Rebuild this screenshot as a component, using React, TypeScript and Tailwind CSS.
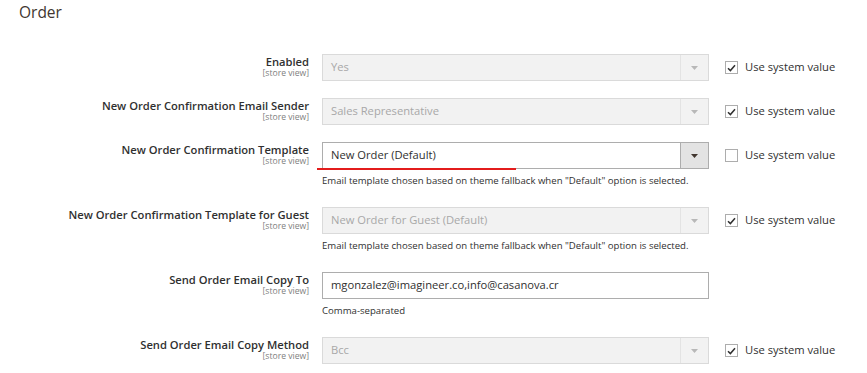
import type { ReactNode } from "react";

type RowProps = {
  label: string;
  children: ReactNode;
  note?: string;
  useSystem?: boolean | null;
};

function Arrow({ active }: { active?: boolean }) {
  return (
    <svg width="7" height="4" viewBox="0 0 7 4" className="block">
      <path d="M0 0h7L3.5 4z" fill={active ? "#41362f" : "#b8b8b8"} />
    </svg>
  );
}

function Select({ value, disabled, underline }: { value: string; disabled?: boolean; underline?: boolean }) {
  return (
    <div
      className={
        disabled
          ? "relative flex h-[27px] w-full items-center border border-[#dadada] bg-[#f2f2f2]"
          : "relative flex h-[27px] w-full items-center border border-[#adadad] bg-white"
      }
    >
      <span
        className={
          disabled
            ? "flex-1 truncate pl-[8px] text-[11.2px] text-[#a8a8a8]"
            : "flex-1 truncate pl-[8px] text-[11.2px] text-[#303030]"
        }
      >
        {value}
      </span>
      <span
        className={
          disabled
            ? "flex h-full w-[28px] items-center justify-center border-l border-[#e3e3e3]"
            : "flex h-full w-[28px] items-center justify-center border-l border-[#adadad] bg-[#e3e3e3]"
        }
      >
        <Arrow active={!disabled} />
      </span>
      {underline ? <span className="absolute bottom-[-2px] left-[-6px] h-[2px] w-[199px] bg-[#e31c1c]" /> : null}
    </div>
  );
}

function Checkbox({ checked }: { checked: boolean }) {
  return (
    <span className="flex h-[13px] w-[13px] items-center justify-center border border-[#adadad] bg-white">
      {checked ? (
        <svg width="9" height="8" viewBox="0 0 9 8">
          <path d="M1 4.2l2.4 2.4L8 1.2" fill="none" stroke="#303030" strokeWidth="1.5" />
        </svg>
      ) : null}
    </span>
  );
}

function Row({ label, children, note, useSystem }: RowProps) {
  return (
    <div className={note ? "flex items-start pb-[19px]" : "flex items-start pb-[17px]"}>
      <div className="w-[309px] pt-[1px] text-right">
        <div className="text-[11.2px] font-[560] leading-[13px] text-[#303030]">{label}</div>
        <div className="text-[8.6px] leading-[10px] text-[#808080]">[store view]</div>
      </div>
      <div className="ml-[13px] w-[387px]">
        {children}
        {note ? <div className="mt-[5px] text-[9.6px] leading-[14px] text-[#303030]">{note}</div> : null}
      </div>
      {useSystem !== null && useSystem !== undefined ? (
        <div className="ml-[16px] flex h-[27px] items-center gap-[7px]">
          <Checkbox checked={useSystem} />
          <span className="text-[11.2px] text-[#303030]">Use system value</span>
        </div>
      ) : null}
    </div>
  );
}

const fallbackNote = 'Email template chosen based on theme fallback when "Default" option is selected.';

export default function App() {
  return (
    <div className="h-[373px] w-[867px] overflow-hidden bg-white font-['Open_Sans',sans-serif]">
      <div className="px-[19px] pt-[2px] text-[15.5px] leading-[20px] text-[#41362f]">Order</div>
      <div className="pt-[32px]">
        <Row label="Enabled" useSystem={true}>
          <Select value="Yes" disabled />
        </Row>
        <Row label="New Order Confirmation Email Sender" useSystem={true}>
          <Select value="Sales Representative" disabled />
        </Row>
        <Row label="New Order Confirmation Template" note={fallbackNote} useSystem={false}>
          <Select value="New Order (Default)" underline />
        </Row>
        <Row label="New Order Confirmation Template for Guest" note={fallbackNote} useSystem={true}>
          <Select value="New Order for Guest (Default)" disabled />
        </Row>
        <Row label="Send Order Email Copy To" note="Comma-separated" useSystem={null}>
          <div className="flex h-[27px] w-full items-center border border-[#adadad] bg-white pl-[8px] text-[11.2px] text-[#303030]">
            mgonzalez@imagineer.co,info@casanova.cr
          </div>
        </Row>
        <Row label="Send Order Email Copy Method" useSystem={true}>
          <Select value="Bcc" disabled />
        </Row>
      </div>
    </div>
  );
}
